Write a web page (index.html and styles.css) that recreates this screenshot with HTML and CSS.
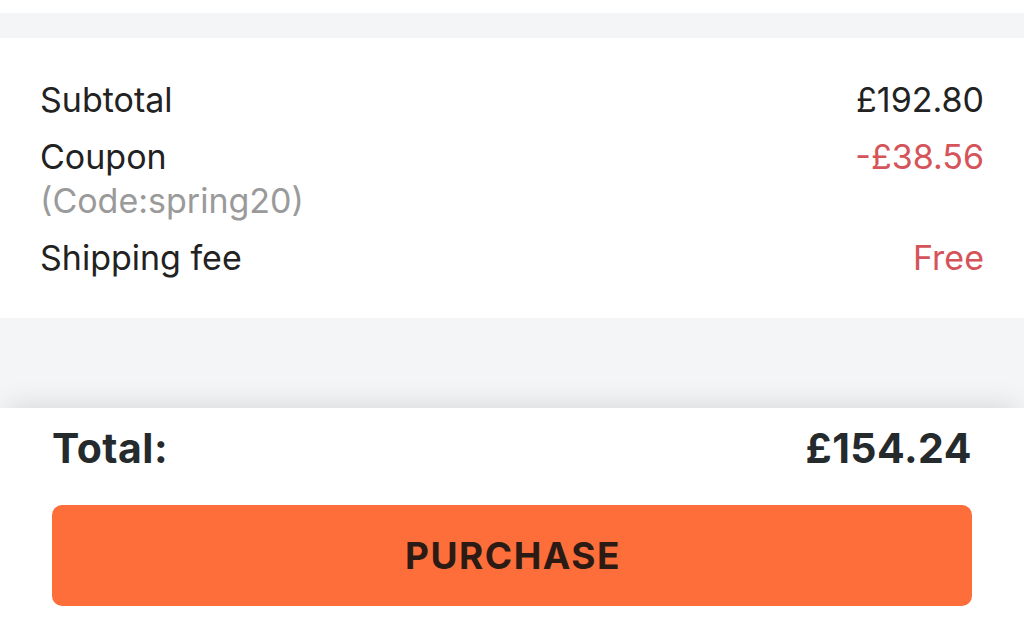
FILE: index.html
```html
<!DOCTYPE html>
<html>
<head>
<meta charset="utf-8">
<link rel="stylesheet" href="styles.css">
</head>
<body>
<div class="page">
  <div class="top-white"></div>
  <div class="band"></div>
  <section class="summary">
    <div class="row">
      <span class="label">Subtotal</span>
      <span class="value">£192.80</span>
    </div>
    <div class="row">
      <div class="label-group">
        <span class="label">Coupon</span>
        <span class="code">(Code:spring20)</span>
      </div>
      <span class="value red">-£38.56</span>
    </div>
    <div class="row">
      <span class="label">Shipping fee</span>
      <span class="value red">Free</span>
    </div>
  </section>
  <div class="spacer"></div>
  <footer class="footer">
    <div class="total-row">
      <span class="total-label">Total:</span>
      <span class="total-value">£154.24</span>
    </div>
    <button class="purchase">PURCHASE</button>
  </footer>
</div>
</body>
</html>
```

FILE: styles.css
```css
html, body {
  margin: 0;
  padding: 0;
  background: #ffffff;
}
body {
  font-family: Inter, "Liberation Sans", sans-serif;
  color: #222222;
  width: 1024px;
  height: 627px;
  overflow: hidden;
}
.page {
  display: flex;
  flex-direction: column;
  height: 627px;
}
.top-white {
  height: 13px;
  background: #ffffff;
}
.band {
  height: 25px;
  background: #f4f5f7;
}
.summary {
  background: #ffffff;
  padding: 40px 40px 38px 40px;
  display: flex;
  flex-direction: column;
  gap: 13px;
}
.row {
  display: flex;
  justify-content: space-between;
  align-items: flex-start;
  font-size: 34px;
  line-height: 44px;
}
.label-group {
  display: flex;
  flex-direction: column;
}
.label {
  color: #222222;
}
.code {
  color: #9a9a9a;
}
.value {
  color: #222222;
}
.value.red {
  color: #d5545a;
}
.spacer {
  flex: 1;
  background: #f4f5f7;
}
.footer {
  height: 219px;
  background: #ffffff;
  box-shadow: 0 -8px 28px -8px rgba(0, 0, 0, 0.14);
  padding: 0 52px;
  box-sizing: border-box;
  display: flex;
  flex-direction: column;
  position: relative;
}
.total-row {
  display: flex;
  justify-content: space-between;
  font-size: 41px;
  font-weight: 700;
  letter-spacing: 0.5px;
  color: #252a2d;
  line-height: 50px;
  margin-top: 15px;
}
.purchase {
  margin-top: 32px;
  height: 101px;
  border: none;
  border-radius: 10px;
  background: #fd6e3a;
  color: #2b1b14;
  font-family: inherit;
  font-size: 37px;
  font-weight: 700;
  letter-spacing: 1.5px;
  width: 100%;
  padding: 0 0 0 2px;
}
```
